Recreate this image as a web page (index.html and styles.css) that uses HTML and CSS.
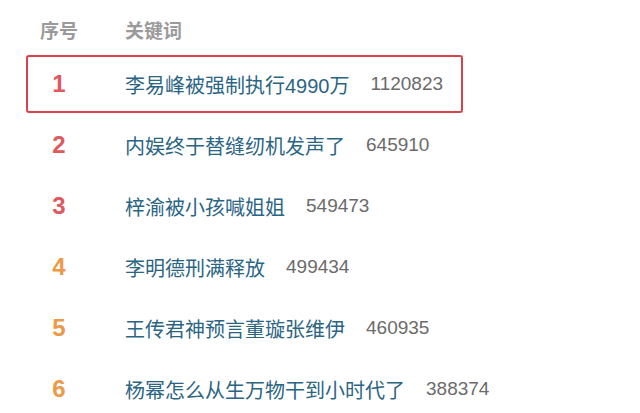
FILE: index.html
```html
<!DOCTYPE html>
<html lang="zh-CN">
<head>
  <meta charset="UTF-8" />
  <meta name="viewport" content="width=device-width, initial-scale=1.0" />
  <title>热搜榜</title>
  <link rel="stylesheet" href="styles.css">
</head>
<body>
  <section class="board">
    <div class="head">
      <span class="rank">序号</span>
      <span class="word">关键词</span>
    </div>

    <ul class="list">
      <li class="row top">
        <span class="rank red">1</span>
        <span class="word">李易峰被强制执行4990万</span>
        <span class="count">1120823</span>
      </li>
      <li class="row">
        <span class="rank red">2</span>
        <span class="word">内娱终于替缝纫机发声了</span>
        <span class="count">645910</span>
      </li>
      <li class="row">
        <span class="rank red">3</span>
        <span class="word">梓渝被小孩喊姐姐</span>
        <span class="count">549473</span>
      </li>
      <li class="row">
        <span class="rank orange">4</span>
        <span class="word">李明德刑满释放</span>
        <span class="count">499434</span>
      </li>
      <li class="row">
        <span class="rank orange">5</span>
        <span class="word">王传君神预言董璇张维伊</span>
        <span class="count">460935</span>
      </li>
      <li class="row">
        <span class="rank orange">6</span>
        <span class="word">杨幂怎么从生万物干到小时代了</span>
        <span class="count">388374</span>
      </li>
    </ul>
  </section>
</body>
</html>
```

FILE: styles.css
```css
body {
  margin: 0;
  padding: 0;
  background: #fff;
  font-family: "Liberation Sans", "Noto Sans CJK SC", sans-serif;
  overflow: hidden;
}

.board {
  padding: 16px 0 0 26px;
}

.head {
  display: flex;
  align-items: center;
  height: 26px;
  padding-left: 2px;
  color: #9a9a9a;
  font-size: 19px;
  font-weight: bold;
}

.head .rank {
  width: 62px;
  text-align: center;
}

.head .word {
  margin-left: 35px;
}

.list {
  list-style: none;
  margin: 13px 0 0;
  padding: 0;
}

.row {
  display: flex;
  align-items: center;
  width: 437px;
  height: 58px;
  margin-bottom: 3px;
  border: 2px solid transparent;
  border-radius: 3px;
  box-sizing: border-box;
}

.row.top {
  border-color: #d8434b;
}

.row .rank {
  flex: none;
  width: 62px;
  text-align: center;
  font-size: 24px;
  font-weight: bold;
}

.red {
  color: #e0585d;
}

.orange {
  color: #ec9a45;
}

.row .word {
  flex: none;
  margin-left: 35px;
  font-size: 20px;
  color: #2b6584;
  white-space: nowrap;
}

.count {
  flex: none;
  margin-left: 21px;
  font-size: 19px;
  color: #6b6b6b;
}
```
